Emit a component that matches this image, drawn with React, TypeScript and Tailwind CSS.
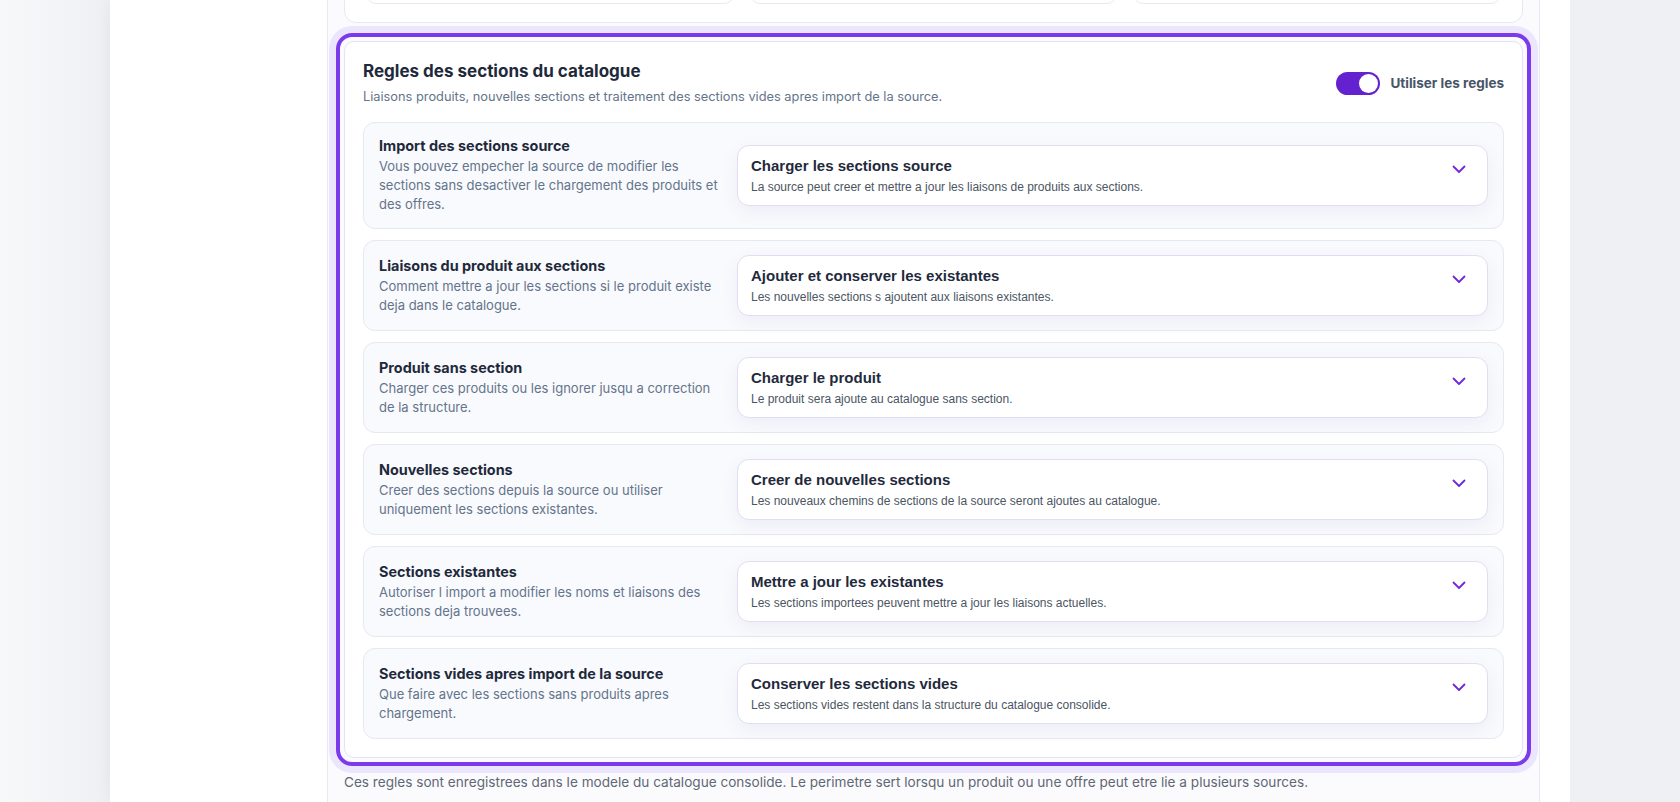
import React from "react";

type Rule = {
  title: string;
  desc: string;
  value: string;
  hint: string;
};

const rules: Rule[] = [
  {
    title: "Import des sections source",
    desc: "Vous pouvez empecher la source de modifier les sections sans desactiver le chargement des produits et des offres.",
    value: "Charger les sections source",
    hint: "La source peut creer et mettre a jour les liaisons de produits aux sections.",
  },
  {
    title: "Liaisons du produit aux sections",
    desc: "Comment mettre a jour les sections si le produit existe deja dans le catalogue.",
    value: "Ajouter et conserver les existantes",
    hint: "Les nouvelles sections s ajoutent aux liaisons existantes.",
  },
  {
    title: "Produit sans section",
    desc: "Charger ces produits ou les ignorer jusqu a correction de la structure.",
    value: "Charger le produit",
    hint: "Le produit sera ajoute au catalogue sans section.",
  },
  {
    title: "Nouvelles sections",
    desc: "Creer des sections depuis la source ou utiliser uniquement les sections existantes.",
    value: "Creer de nouvelles sections",
    hint: "Les nouveaux chemins de sections de la source seront ajoutes au catalogue.",
  },
  {
    title: "Sections existantes",
    desc: "Autoriser l import a modifier les noms et liaisons des sections deja trouvees.",
    value: "Mettre a jour les existantes",
    hint: "Les sections importees peuvent mettre a jour les liaisons actuelles.",
  },
  {
    title: "Sections vides apres import de la source",
    desc: "Que faire avec les sections sans produits apres chargement.",
    value: "Conserver les sections vides",
    hint: "Les sections vides restent dans la structure du catalogue consolide.",
  },
];

function Chevron() {
  return (
    <svg
      width="24"
      height="24"
      viewBox="0 0 24 24"
      fill="none"
      stroke="#6d28d9"
      strokeWidth="1.8"
      strokeLinecap="round"
      strokeLinejoin="round"
      className="shrink-0"
    >
      <path d="m6.5 9.5 5.5 5.5 5.5-5.5" />
    </svg>
  );
}

function RuleRow({ rule }: { rule: Rule }) {
  return (
    <div className="grid grid-cols-[340px_1fr] items-center gap-[18px] rounded-[12px] border border-[#e7e9f0] bg-[#f9fafd] px-[15px] py-[14px]">
      <div>
        <div className="text-[14.4px] font-bold leading-[18px] text-[#1e293b]">{rule.title}</div>
        <div className="mt-[2px] text-[13px] leading-[19px] text-[#64748b]">{rule.desc}</div>
      </div>
      <div className="flex items-start rounded-[12px] border border-[#e2ddf2] bg-white pb-[9px] pl-[13px] pr-[16px] pt-[11px] shadow-[0_6px_18px_rgba(90,70,170,0.07)] [font-family:'Liberation_Sans',Arial,sans-serif]">
        <div className="min-w-0 flex-1">
          <div className="text-[15px] font-bold leading-[18px] text-[#1f2a3c]">{rule.value}</div>
          <div className="mt-[4px] text-[12px] leading-[17px] text-[#4b5563]">{rule.hint}</div>
        </div>
        <Chevron />
      </div>
    </div>
  );
}

export default function App() {
  return (
    <div className="flex h-[802px] w-full overflow-hidden bg-[#eff1f4] [font-family:Inter,'Noto_Sans',sans-serif]">
      <div className="w-[110px] shrink-0 bg-gradient-to-r from-[#f7f8fa] to-[#eef0f3]" />
      <div className="flex w-[1460px] shrink-0 bg-white shadow-[0_0_18px_rgba(15,23,42,0.06)]">
        <div className="w-[217px] shrink-0" />
        <main className="w-[1213px] shrink-0">
          <div className="-mt-[100px] rounded-[14px] border border-[#e7e8f0] bg-[#fbfbfe] px-[16px] pt-[16px]">
            <div className="rounded-[12px] border border-[#e8e9f0] bg-white px-[21px] pb-[18px] pt-[20px]">
              <div className="grid grid-cols-3 gap-[16px]">
                <div className="h-[66px] rounded-[10px] border border-[#e8e9ef] bg-white" />
                <div className="h-[66px] rounded-[10px] border border-[#e8e9ef] bg-white" />
                <div className="h-[66px] rounded-[10px] border border-[#e8e9ef] bg-white" />
              </div>
            </div>

            <div className="-mx-[8px] mt-[10px] rounded-[16px] border-[4px] border-[#7c3aed] p-[4px] shadow-[0_0_0_7px_#ebe5fd]">
              <div className="rounded-[10px] border border-[#e6e1f5] bg-white px-[18px] pb-[18px] pt-[17px]">
                <div className="flex items-center justify-between">
                  <div>
                    <h2 className="text-[17px] font-bold leading-[24px] text-[#1e293b]">
                      Regles des sections du catalogue
                    </h2>
                    <p className="mt-[4px] text-[12.8px] leading-[20px] text-[#64748b]">
                      Liaisons produits, nouvelles sections et traitement des sections vides apres import de la source.
                    </p>
                  </div>
                  <div className="flex items-center gap-[10px]">
                    <div className="flex h-[23px] w-[44px] items-center justify-end rounded-full bg-[#6421cf] px-[2px]">
                      <div className="h-[19px] w-[19px] rounded-full bg-white" />
                    </div>
                    <span className="text-[13.5px] font-bold text-[#475569]">Utiliser les regles</span>
                  </div>
                </div>

                <div className="mt-[15px] flex flex-col gap-[11px]">
                  {rules.map((r) => (
                    <RuleRow key={r.title} rule={r} />
                  ))}
                </div>
              </div>
            </div>

            <p className="mt-[6px] pb-6 text-[13.6px] leading-[20px] text-[#5f6774]">
              Ces regles sont enregistrees dans le modele du catalogue consolide. Le perimetre sert lorsqu un produit ou une offre peut etre lie a plusieurs sources.
            </p>
          </div>
        </main>
      </div>
      <div className="flex-1 bg-[#eef0f3]" />
    </div>
  );
}
